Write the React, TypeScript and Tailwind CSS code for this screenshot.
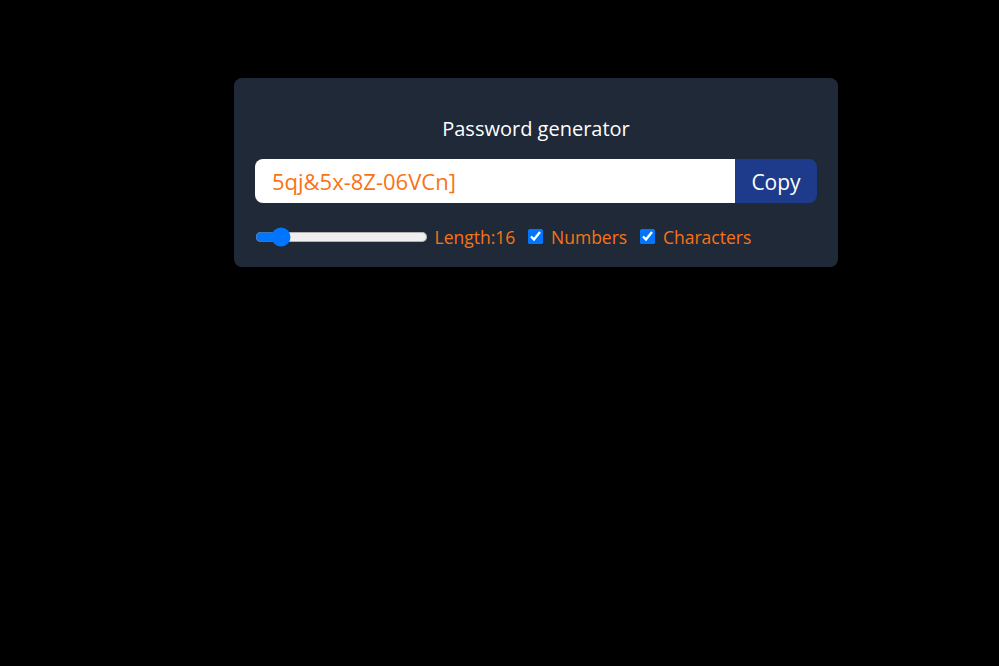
import { useState } from 'react';

export default function App() {
  const [length, setLength] = useState(16);
  const [numbers, setNumbers] = useState(true);
  const [chars, setChars] = useState(true);
  const password = '5qj&5x-8Z-06VCn]';

  return (
    <div className="min-h-[666px] w-full bg-black pt-[78px] pl-[234px]" style={{ fontFamily: '"Open Sans", "Noto Sans", sans-serif' }}>
      <div className="w-[604px] h-[189px] rounded-lg bg-[#1f2937] px-[21px] pt-[38px]">
        {/* Title */}
        <h1 className="text-center text-[20px] leading-[26px] text-white">Password generator</h1>

        {/* Output + copy */}
        <div className="mt-[17px] flex h-[44px] overflow-hidden rounded-lg">
          <input
            type="text"
            readOnly
            value={password}
            className="w-full bg-white px-[17px] pt-[1px] text-[22px] text-[#f97316] outline-none"
          />
          <button className="shrink-0 w-[82px] bg-[#1e3a8a] pt-[3px] text-[21px] text-white">Copy</button>
        </div>

        {/* Options */}
        <div className="mt-[23px] flex items-center text-[17.5px] leading-[22px] text-[#f97316]">
          <input
            type="range"
            min={6}
            max={100}
            value={length}
            onChange={(e) => setLength(Number(e.target.value))}
            className="m-0 w-[138px] cursor-pointer [zoom:1.25]"
          />
          <label className="ml-[7px]">Length:{length}</label>
          <input
            type="checkbox"
            checked={numbers}
            onChange={() => setNumbers(!numbers)}
            className="ml-[10px] m-0 [zoom:1.25]"
          />
          <label className="ml-[7px]">Numbers</label>
          <input
            type="checkbox"
            checked={chars}
            onChange={() => setChars(!chars)}
            className="ml-[10px] m-0 [zoom:1.25]"
          />
          <label className="ml-[7px]">Characters</label>
        </div>
      </div>
    </div>
  );
}
